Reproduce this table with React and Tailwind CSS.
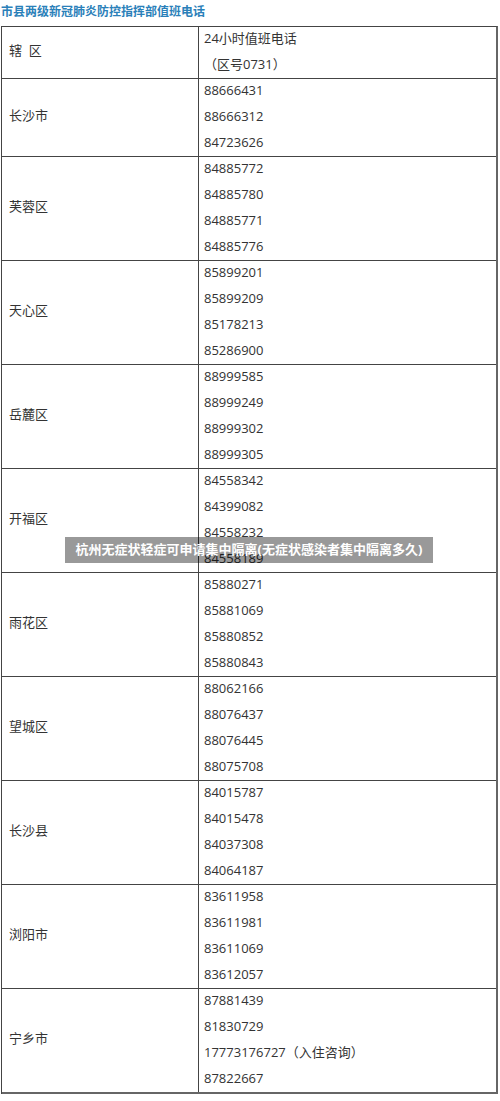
import React from 'react';

const rows = [
  { area: '长沙市', phones: ['88666431', '88666312', '84723626'] },
  { area: '芙蓉区', phones: ['84885772', '84885780', '84885771', '84885776'] },
  { area: '天心区', phones: ['85899201', '85899209', '85178213', '85286900'] },
  { area: '岳麓区', phones: ['88999585', '88999249', '88999302', '88999305'] },
  { area: '开福区', phones: ['84558342', '84399082', '84558232', '84558189'] },
  { area: '雨花区', phones: ['85880271', '85881069', '85880852', '85880843'] },
  { area: '望城区', phones: ['88062166', '88076437', '88076445', '88075708'] },
  { area: '长沙县', phones: ['84015787', '84015478', '84037308', '84064187'] },
  { area: '浏阳市', phones: ['83611958', '83611981', '83611069', '83612057'] },
  { area: '宁乡市', phones: ['87881439', '81830729', '17773176727（入住咨询）', '87822667'] },
];

const font = { fontFamily: '"Open Sans", "Noto Sans CJK SC", sans-serif' };

export default function App() {
  return (
    <div className="relative w-[500px] h-[1101px] bg-white text-[13px] text-[#333]" style={font}>
      {/* Title */}
      <div className="h-[26px] pl-[1px] text-[12px] font-bold leading-[24px] text-[#2a80b9]">
        市县两级新冠肺炎防控指挥部值班电话
      </div>

      {/* Table */}
      <div className="ml-[1px] w-[497px] border-l border-t border-[#444] border-r-2 border-r-[#666]">
        <div className="flex border-b border-[#444]">
          <div className="w-[197px] shrink-0 border-r border-[#444] flex items-center pl-[7px] pb-[3px]">
            辖&nbsp;&nbsp;区
          </div>
          <div className="flex-1 pl-[5px]">
            <div className="leading-[22px] pb-[4px]">24小时值班电话</div>
            <div className="leading-[22px] pb-[3px]">（区号0731）</div>
          </div>
        </div>

        {rows.map((row, i) => (
          <div
            key={row.area}
            className={`flex border-[#444] ${i === rows.length - 1 ? 'border-b-2 border-b-[#666]' : 'border-b'}`}
          >
            <div className="w-[197px] shrink-0 border-r border-[#444] flex items-center pl-[7px] pb-[3px]">
              {row.area}
            </div>
            <div className="flex-1 pl-[5px]">
              {row.phones.map((p, j) => (
                <div
                  key={j}
                  className={j === row.phones.length - 1 ? 'leading-[22px] pb-[3px]' : 'leading-[22px] pb-[4px]'}
                >
                  {p}
                </div>
              ))}
            </div>
          </div>
        ))}
      </div>

      {/* Watermark caption */}
      <div className="absolute left-[65px] top-[537px] w-[368px] h-[26px] bg-black/40 flex items-center justify-center text-white font-bold text-[13px]">
        杭州无症状轻症可申请集中隔离(无症状感染者集中隔离多久)
      </div>
    </div>
  );
}
